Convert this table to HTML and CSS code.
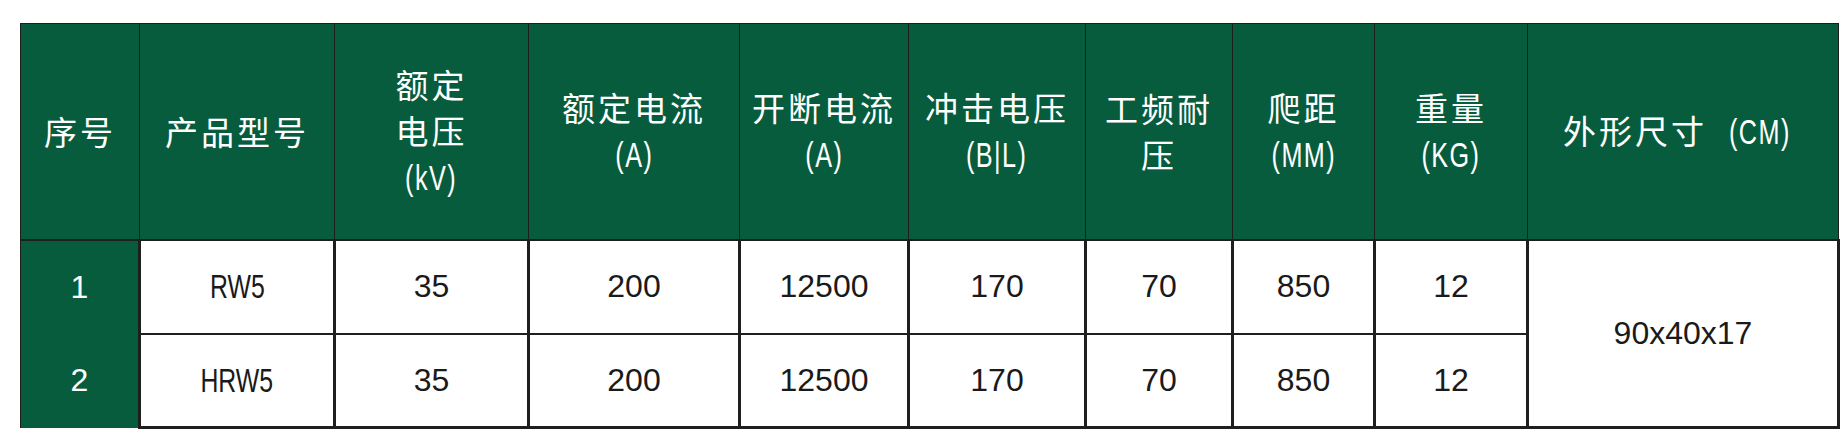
FILE: index.html
```html
<!DOCTYPE html>
<html lang="zh-CN">
<head>
<meta charset="utf-8">
<title>RW5 参数表</title>
<link rel="stylesheet" href="styles.css">
</head>
<body>
<div class="wrap">
<table class="spec">
  <colgroup>
    <col class="c1"><col class="c2"><col class="c3"><col class="c4"><col class="c5">
    <col class="c6"><col class="c7"><col class="c8"><col class="c9"><col class="c10">
  </colgroup>
  <thead>
    <tr class="hrow">
      <th>序号</th>
      <th>产品型号</th>
      <th>额定<br>电压<br><span class="en">(kV)</span></th>
      <th>额定电流<br><span class="en">(A)</span></th>
      <th>开断电流<br><span class="en">(A)</span></th>
      <th>冲击电压<br><span class="en">(B|L)</span></th>
      <th>工频耐<br>压</th>
      <th>爬距<br><span class="en">(MM)</span></th>
      <th>重量<br><span class="en">(KG)</span></th>
      <th class="last">外形尺寸 <span class="en">(CM)</span></th>
    </tr>
  </thead>
  <tbody>
    <tr class="brow r1">
      <td class="idx">1</td>
      <td class="model"><span class="nar">RW5</span></td>
      <td>35</td>
      <td>200</td>
      <td>12500</td>
      <td>170</td>
      <td>70</td>
      <td>850</td>
      <td>12</td>
      <td class="dim" rowspan="2">90x40x17</td>
    </tr>
    <tr class="brow r2">
      <td class="idx">2</td>
      <td class="model"><span class="nar">HRW5</span></td>
      <td>35</td>
      <td>200</td>
      <td>12500</td>
      <td>170</td>
      <td>70</td>
      <td>850</td>
      <td>12</td>
    </tr>
  </tbody>
</table>
</div>
</body>
</html>
```
FILE: styles.css
```css
html, body {
  margin: 0;
  padding: 0;
  background: #ffffff;
}

.wrap {
  padding: 23px 0 0 20px;
}

.spec {
  border-collapse: collapse;
  table-layout: fixed;
  width: 1818px;
  font-family: "Liberation Sans", Arial, "Noto Sans CJK SC", sans-serif;
}

.c1 { width: 119px; }
.c2 { width: 195px; }
.c3 { width: 194px; }
.c4 { width: 211px; }
.c5 { width: 169px; }
.c6 { width: 177px; }
.c7 { width: 147px; }
.c8 { width: 142px; }
.c9 { width: 153px; }
.c10 { width: 311px; }

.hrow {
  height: 216px;
}

.hrow th {
  background: #075c3e;
  color: #ffffff;
  font-family: "Noto Sans CJK SC", "Liberation Sans", sans-serif;
  font-weight: 400;
  font-size: 33px;
  line-height: 46px;
  letter-spacing: 3px;
  text-align: center;
  vertical-align: middle;
  border: 1px solid #1c1f1d;
  border-bottom: 2px solid #1c1f1d;
  padding: 0;
}

.hrow th .en {
  display: inline-block;
  font-family: "Liberation Sans", sans-serif;
  font-size: 35px;
  letter-spacing: 2px;
  transform: scaleX(0.72);
}

.brow {
  height: 94px;
}

.brow td {
  text-align: center;
  vertical-align: middle;
  font-size: 32px;
  color: #1a1a1a;
  border-left: 3px solid #1f1f1f;
  border-right: 3px solid #1f1f1f;
  border-top: 2px solid #1f1f1f;
  border-bottom: 2px solid #1f1f1f;
  padding: 0;
}

.r2 td {
  border-bottom: 3px solid #1f1f1f;
}

.brow td.idx {
  background: #075c3e;
  color: #ffffff;
  border-left: 1px solid #1c1f1d;
  border-right: 1px solid #1c1f1d;
  border-top: none;
  border-bottom: none;
}

.r1 td.idx {
  border-top: 2px solid #1c1f1d;
}

.brow td.model .nar {
  display: inline-block;
  font-size: 34px;
  transform: scaleX(0.73);
}

.brow td.dim {
  border-bottom: 3px solid #1f1f1f;
}
```
